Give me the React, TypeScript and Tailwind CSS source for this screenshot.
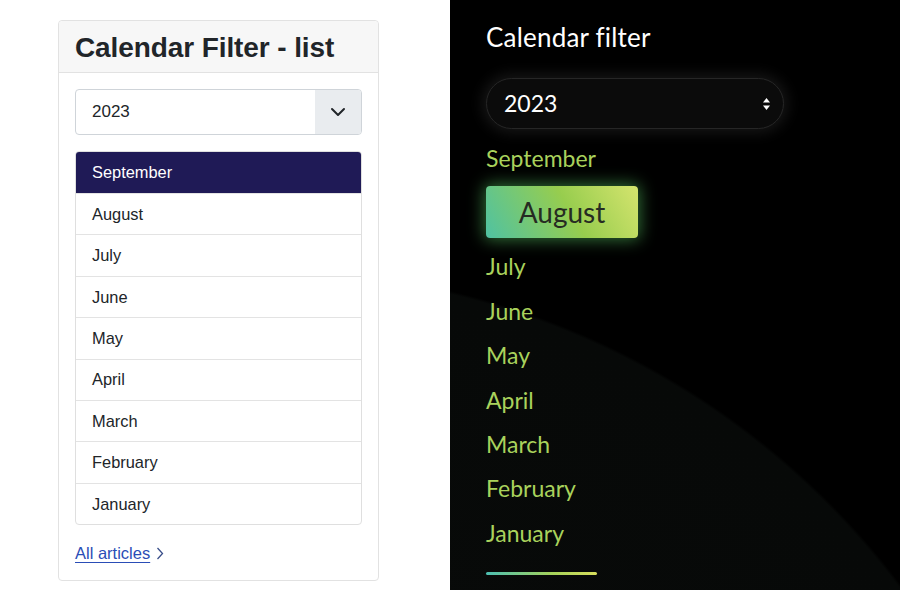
import React from "react";

const months = ["September","August","July","June","May","April","March","February","January"];

function LeftPanel() {
  return (
    <div className="w-[450px] h-[590px] bg-white pt-[20px] pl-[58px]" style={{ fontFamily: '"Liberation Sans", Arial, sans-serif' }}>
      <div className="w-[321px] h-[561px] border border-[#e2e2e2] rounded-[4px] flex flex-col">
        <div className="h-[52px] bg-[#f7f7f7] border-b border-[#e2e2e2] rounded-t-[4px] pl-[16px] flex items-center">
          <h2 className="text-[28px] font-bold text-[#212529] leading-none tracking-[-0.1px] pt-[2px]">Calendar Filter - list</h2>
        </div>
        <div className="px-[16px] pt-[16px] flex flex-col">
          <div className="h-[46px] w-[287px] border border-[#cfd4d9] rounded-[4px] flex overflow-hidden">
            <div className="flex-1 flex items-center pl-[16px] text-[17px] text-[#212529]">2023</div>
            <div className="w-[46px] bg-[#e9ecef] flex items-center justify-center">
              <svg width="16" height="10" viewBox="0 0 16 10" fill="none">
                <path d="M2 2l6 6 6-6" stroke="#212529" strokeWidth="2" strokeLinecap="round" strokeLinejoin="round" />
              </svg>
            </div>
          </div>
          <div className="mt-[16px] w-[287px] border border-[#dfdfdf] rounded-[4px] flex flex-col overflow-hidden">
            {months.map((m, i) => (
              <div
                key={m}
                className={
                  i === 0
                    ? "h-[41px] flex items-center pl-[16px] text-[16.4px] bg-[#1f1a56] text-white"
                    : "h-[41.4px] flex items-center pl-[16px] text-[16.4px] text-[#212529] border-t border-[#e3e3e3]"
                }
              >
                {m}
              </div>
            ))}
          </div>
          <div className="mt-[20px] flex items-center gap-[6px]">
            <a href="#" className="text-[16.5px] text-[#2a4db6] underline underline-offset-[3px] leading-none">All articles</a>
            <svg width="8" height="13" viewBox="0 0 8 13" fill="none">
              <path d="M1.5 1l5 5.5-5 5.5" stroke="#3a4f8a" strokeWidth="1.3" />
            </svg>
          </div>
        </div>
      </div>
    </div>
  );
}

function RightPanel() {
  return (
    <div
      className="w-[450px] h-[590px] bg-black pl-[36px] relative overflow-hidden"
      style={{
        fontFamily: 'Lato, "Noto Sans", sans-serif',
        backgroundImage: "radial-gradient(circle 790px at -180px 1060px, #090b0a 0%, #070908 99.6%, #000 100%)",
      }}
    >
      <div className="pt-[22px] h-[56px] text-[26px] text-white leading-[30px] tracking-[0.2px]">Calendar filter</div>
      <div className="mt-[22px] w-[298px] h-[51px] rounded-full bg-[#0b0b0b] border border-[#262626] shadow-[0_0_14px_4px_rgba(40,40,40,0.55)] flex items-center pl-[17px] pr-[12px]">
        <span className="flex-1 text-[23px] text-white">2023</span>
        <svg width="9" height="14" viewBox="0 0 9 14">
          <path d="M4.5 1L8 5.5H1z" fill="#fff" />
          <path d="M4.5 13L8 8.5H1z" fill="#fff" />
        </svg>
      </div>
      <div className="mt-[7px] flex flex-col">
        {months.map((m, i) =>
          i === 1 ? (
            <div
              key={m}
              className="my-[6px] w-[152px] h-[52px] rounded-[4px] flex items-center justify-center text-[28px] text-[#262b22] shadow-[0_0_16px_2px_rgba(90,200,100,0.55)]"
              style={{ backgroundImage: "linear-gradient(60deg, #4fc2a2 0%, #97cd4e 55%, #d5e46e 100%)" }}
            >
              {m}
            </div>
          ) : (
            <div key={m} className="h-[44.4px] leading-[44.4px] text-[23px] text-[#a9d25c]">
              {m}
            </div>
          )
        )}
      </div>
      <div className="mt-[17px] w-[111px] h-[3px] rounded-full" style={{ backgroundImage: "linear-gradient(90deg, #4cbfb2, #a6d25a 60%, #d7de5c)" }} />
    </div>
  );
}

export default function App() {
  return (
    <div className="w-[900px] h-[590px] flex overflow-hidden">
      <LeftPanel />
      <RightPanel />
    </div>
  );
}
